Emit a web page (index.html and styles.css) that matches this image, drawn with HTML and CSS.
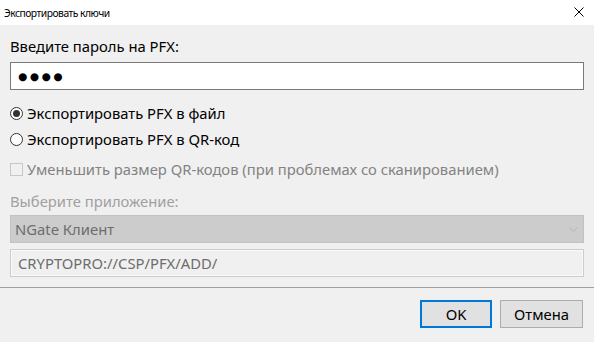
FILE: index.html
```html
<!DOCTYPE html>
<html lang="ru">
<head>
<meta charset="utf-8">
<title>Экспортировать ключи</title>
<link rel="stylesheet" href="styles.css">
</head>
<body>
<div class="window">
  <div class="titlebar">
    <span class="title">Экспортировать ключи</span>
    <svg class="close" width="10" height="10" viewBox="0 0 10 10"><path d="M0.5 0.5 L9.5 9.5 M9.5 0.5 L0.5 9.5" stroke="#000" stroke-width="1" fill="none"/></svg>
  </div>
  <div class="content">
    <div class="label">Введите пароль на PFX:</div>
    <div class="input"><span class="dots">●●●●</span></div>
    <div class="options">
      <div class="radio-row"><span class="radio checked"></span><span>Экспортировать PFX в файл</span></div>
      <div class="radio-row"><span class="radio"></span><span>Экспортировать PFX в QR-код</span></div>
    </div>
    <div class="check-row"><span class="checkbox"></span><span>Уменьшить размер QR-кодов (при проблемах со сканированием)</span></div>
    <div class="label disabled">Выберите приложение:</div>
    <div class="select">
      <span>NGate Клиент</span>
      <svg class="chev" width="9" height="5" viewBox="0 0 9 5"><path d="M0.5 0.5 L4.5 4.5 L8.5 0.5" stroke="#b4b4b4" stroke-width="1" fill="none"/></svg>
    </div>
    <div class="textfield">CRYPTOPRO://CSP/PFX/ADD/</div>
  </div>
  <div class="footer">
    <button class="btn default">OK</button>
    <button class="btn">Отмена</button>
  </div>
</div>
</body>
</html>
```

FILE: styles.css
```css
* { box-sizing: border-box; }
html, body { margin: 0; padding: 0; }
body {
  width: 594px;
  height: 342px;
  overflow: hidden;
  background: #f0f0f0;
  font-family: "Noto Sans", "Open Sans", sans-serif;
  font-size: 14.8px;
  color: #000;
}
.window { display: flex; flex-direction: column; height: 342px; }
.titlebar {
  height: 25px;
  background: #fff;
  display: flex;
  align-items: center;
  justify-content: space-between;
  padding: 0 10px 0 4px;
  font-size: 10.3px;
  letter-spacing: -0.5px;
}
.close { display: block; margin-top: -1px; }
.content {
  padding: 11px 10px 0 10px;
  display: flex;
  flex-direction: column;
}
.label { height: 20px; line-height: 20px; }
.label.disabled { color: #a0a0a0; margin-top: 12px; }
.input {
  margin-top: 6px;
  height: 28px;
  background: #fff;
  border: 1px solid #7a7a7a;
  display: flex;
  align-items: center;
  padding-left: 7px;
}
.dots { font-family: "DejaVu Sans", sans-serif; font-size: 10.5px; letter-spacing: 2.6px; }
.options { margin-top: 13px; display: flex; flex-direction: column; gap: 6px; }
.radio-row, .check-row { display: flex; align-items: center; height: 20px; gap: 4px; }
.radio {
  width: 13px; height: 13px;
  border: 1px solid #333;
  border-radius: 50%;
  background: #fff;
  position: relative;
}
.radio.checked::after {
  content: "";
  position: absolute;
  left: 2px; top: 2px;
  width: 7px; height: 7px;
  border-radius: 50%;
  background: #333;
}
.check-row { margin-top: 10px; color: #838383; }
.checkbox {
  width: 13px; height: 13px;
  border: 1px solid #c8c8c8;
  background: #f0f0f0;
}
.select {
  margin-top: 4px;
  height: 28px;
  background: #cccccc;
  border: 1px solid #c2c2c2;
  display: flex;
  align-items: center;
  justify-content: space-between;
  padding: 0 5px 0 4px;
  color: #6d6d6d;
}
.chev { display: block; }
.textfield {
  margin-top: 6px;
  height: 28px;
  border: 1px solid #cccccc;
  box-shadow: inset 0 0 0 1px #fafafa;
  display: flex;
  align-items: center;
  padding-left: 7px;
  color: #6d6d6d;
}
.footer {
  margin-top: 10px;
  border-top: 1px solid #a0a0a0;
  flex: 1;
  display: flex;
  justify-content: flex-end;
  align-items: flex-start;
  padding: 12px 11px 0 0;
  gap: 8px;
}
.btn {
  font-family: inherit;
  font-size: 14.8px;
  height: 28px;
  background: #e1e1e1;
  border: 1px solid #adadad;
  color: #000;
  padding: 0;
  width: 83px;
}
.btn.default { border: 2px solid #0078d7; width: 72px; }
```
